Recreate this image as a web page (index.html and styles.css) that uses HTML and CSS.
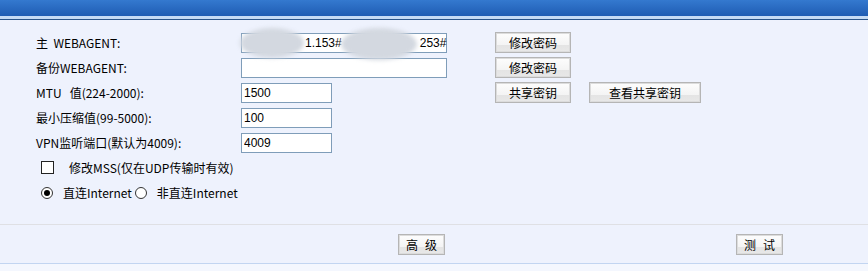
FILE: index.html
```html
<!DOCTYPE html>
<html lang="zh-CN">
<head>
    <meta charset="UTF-8">
    <title>VPN设置</title>
    <link rel="stylesheet" href="styles.css">
</head>
<body>
    <div class="topbar"></div>

    <div class="form">
        <div class="row">
            <span class="label">主&nbsp;&nbsp;WEBAGENT:</span>
            <div class="field field-long masked">
                <span class="part-a">1.153#</span><span class="part-b">253#</span>
                <span class="blur blur-a"></span>
                <span class="blur blur-b"></span>
            </div>
            <button class="btn btn-md">修改密码</button>
        </div>
        <div class="row">
            <span class="label">备份WEBAGENT:</span>
            <input class="field field-long" type="text" value="">
            <button class="btn btn-md">修改密码</button>
        </div>
        <div class="row">
            <span class="label">MTU&nbsp;&nbsp;&nbsp;值(224-2000):</span>
            <input class="field field-short" type="text" value="1500">
            <button class="btn btn-md">共享密钥</button>
            <button class="btn btn-lg">查看共享密钥</button>
        </div>
        <div class="row">
            <span class="label">最小压缩值(99-5000):</span>
            <input class="field field-short" type="text" value="100">
        </div>
        <div class="row">
            <span class="label">VPN监听端口(默认为4009):</span>
            <input class="field field-short" type="text" value="4009">
        </div>
        <div class="row row-check">
            <input class="check" type="checkbox">
            <span class="check-text">修改MSS(仅在UDP传输时有效)</span>
        </div>
        <div class="row row-radio">
            <input class="radio" type="radio" name="mode" checked>
            <span class="radio-text">直连Internet</span>
            <input class="radio" type="radio" name="mode">
            <span class="radio-text">非直连Internet</span>
        </div>
    </div>

    <div class="actions">
        <button class="btn btn-sm">高级</button>
        <button class="btn btn-sm">测试</button>
    </div>
    <div class="bottom"></div>
</body>
</html>
```

FILE: styles.css
```css
body {
    margin: 0;
    background-color: #eef2fd;
    font-family: "Noto Sans CJK SC", "DejaVu Sans", sans-serif;
    font-size: 12px;
    color: #000;
}

.topbar {
    height: 16px;
    background: linear-gradient(#3479cf, #1f5cb3);
    border-bottom: 3px solid #c6dbf5;
    box-shadow: 0 1px 0 #2b5488;
    margin-bottom: 1px;
}

.form {
    padding: 10px 0 19px 36px;
    border-bottom: 1px solid #dfe0e4;
}

.row {
    display: flex;
    align-items: center;
    height: 25px;
}

.label {
    width: 205px;
    line-height: 14px;
    white-space: nowrap;
}

.field {
    box-sizing: border-box;
    height: 20px;
    margin: 0;
    padding: 0 2px;
    border: 1px solid #7f9db9;
    background-color: #fff;
    font-family: "Liberation Sans", Arial, sans-serif;
    font-size: 12px;
    color: #000;
    outline: none;
}

.field-long {
    width: 206px;
    margin-right: 48px;
}

.field-short {
    width: 91px;
    margin-right: 163px;
}

.masked {
    position: relative;
    display: flex;
    align-items: center;
    white-space: nowrap;
}

.part-a {
    margin-left: 61px;
}

.part-b {
    margin-left: 78px;
}

.blur {
    position: absolute;
    background-color: #d3d8e0;
    border-radius: 50%;
    filter: blur(2px);
}

.blur-a {
    left: -2px;
    top: -6px;
    width: 64px;
    height: 30px;
}

.blur-b {
    left: 99px;
    top: -6px;
    width: 76px;
    height: 32px;
}

.btn {
    box-sizing: border-box;
    height: 21px;
    padding: 0;
    border: 1px solid #b5b5b5;
    box-shadow: inset 0 0 0 1px #dcdcdc;
    background: linear-gradient(#fdfdfd 0, #f4f4f4 62%, #e4e4e4 62%, #e8e8e8 100%);
    font-family: "Noto Sans CJK SC", sans-serif;
    font-size: 12px;
    line-height: 17px;
    color: #000;
    white-space: nowrap;
    cursor: pointer;
}

.btn-md {
    width: 76px;
}

.btn-lg {
    width: 112px;
    margin-left: 18px;
}

.btn-sm {
    width: 47px;
    letter-spacing: 7px;
    text-indent: 7px;
}

.row-check .check,
.row-radio .radio {
    appearance: none;
    margin: 0;
    background-color: #fff;
    border: 1px solid #222;
}

.check {
    width: 13px;
    height: 13px;
    margin-left: 5px !important;
}

.check-text {
    margin-left: 15px;
}

.radio {
    position: relative;
    width: 12px;
    height: 12px;
    border-radius: 50%;
    border-color: #333 !important;
}

.row-radio .radio:first-child {
    margin-left: 5px;
}

.radio:checked::after {
    content: "";
    position: absolute;
    left: 2px;
    top: 2px;
    width: 6px;
    height: 6px;
    border-radius: 50%;
    background-color: #000;
}

.radio-text {
    margin: 0 2px 0 10px;
}

.radio-text + .radio {
    margin-left: 1px;
}

.actions {
    display: flex;
    gap: 291px;
    padding: 9px 0 8px 398px;
    border-bottom: 1px solid #c2d5f1;
}

.bottom {
    height: 8px;
    background-color: #f4f7fe;
}
```
